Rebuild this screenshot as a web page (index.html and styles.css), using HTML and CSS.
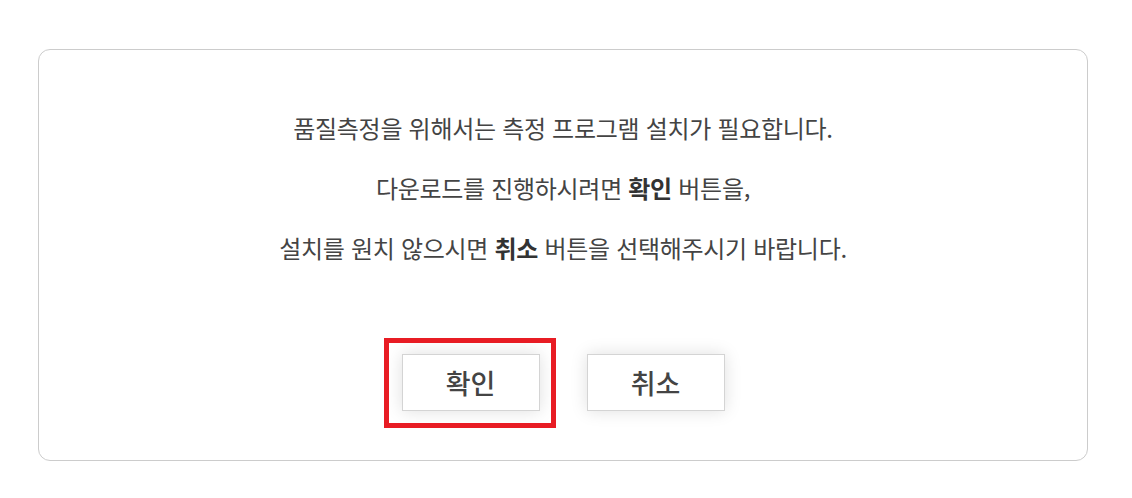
FILE: index.html
```html
<!DOCTYPE html>
<html lang="ko">
<head>
    <meta charset="UTF-8">
    <title>품질측정 프로그램 설치</title>
    <link rel="stylesheet" href="styles.css">
</head>
<body>
    <div class="install-box">
        <div class="install-msg">
            <p>품질측정을 위해서는 측정 프로그램 설치가 필요합니다.</p>
            <p>다운로드를 진행하시려면 <b>확인</b> 버튼을,</p>
            <p>설치를 원치 않으시면 <b>취소</b> 버튼을 선택해주시기 바랍니다.</p>
        </div>
        <div class="btn-row">
            <button class="btn btn-focus">확인</button>
            <button class="btn">취소</button>
        </div>
    </div>
</body>
</html>
```

FILE: styles.css
```css
*{
    padding:0;margin:0;box-sizing:border-box;
}
body{
    background:#fff;
    font-family:"Noto Sans CJK KR","Noto Sans",sans-serif;
    color:#444;
}
.install-box{
    width:1050px;
    margin:49px 0 0 38px;
    padding:48px 0 49px;
    border:1px solid #ccc;
    border-radius:12px;
    text-align:center;
}
.install-msg p{
    font-size:24px;
    line-height:60px;
    letter-spacing:-0.3px;
}
.install-msg b{
    font-weight:700;
    color:#333;
}
.btn-row{
    display:flex;
    justify-content:center;
    gap:47px;
    margin-top:76px;
}
.btn{
    position:relative;
    width:138px;
    height:57px;
    background:#fff;
    border:1px solid #d4d4d4;
    box-shadow:0 0 16px rgba(0,0,0,0.13);
    font-family:inherit;
    font-size:27px;
    font-weight:500;
    color:#444;
    cursor:pointer;/*손 모양 커서*/
}
.btn-focus::after{
    content:"";
    position:absolute;
    left:-19px;top:-17px;right:-17px;bottom:-18px;
    border:5px solid #e81c24;
}
```
